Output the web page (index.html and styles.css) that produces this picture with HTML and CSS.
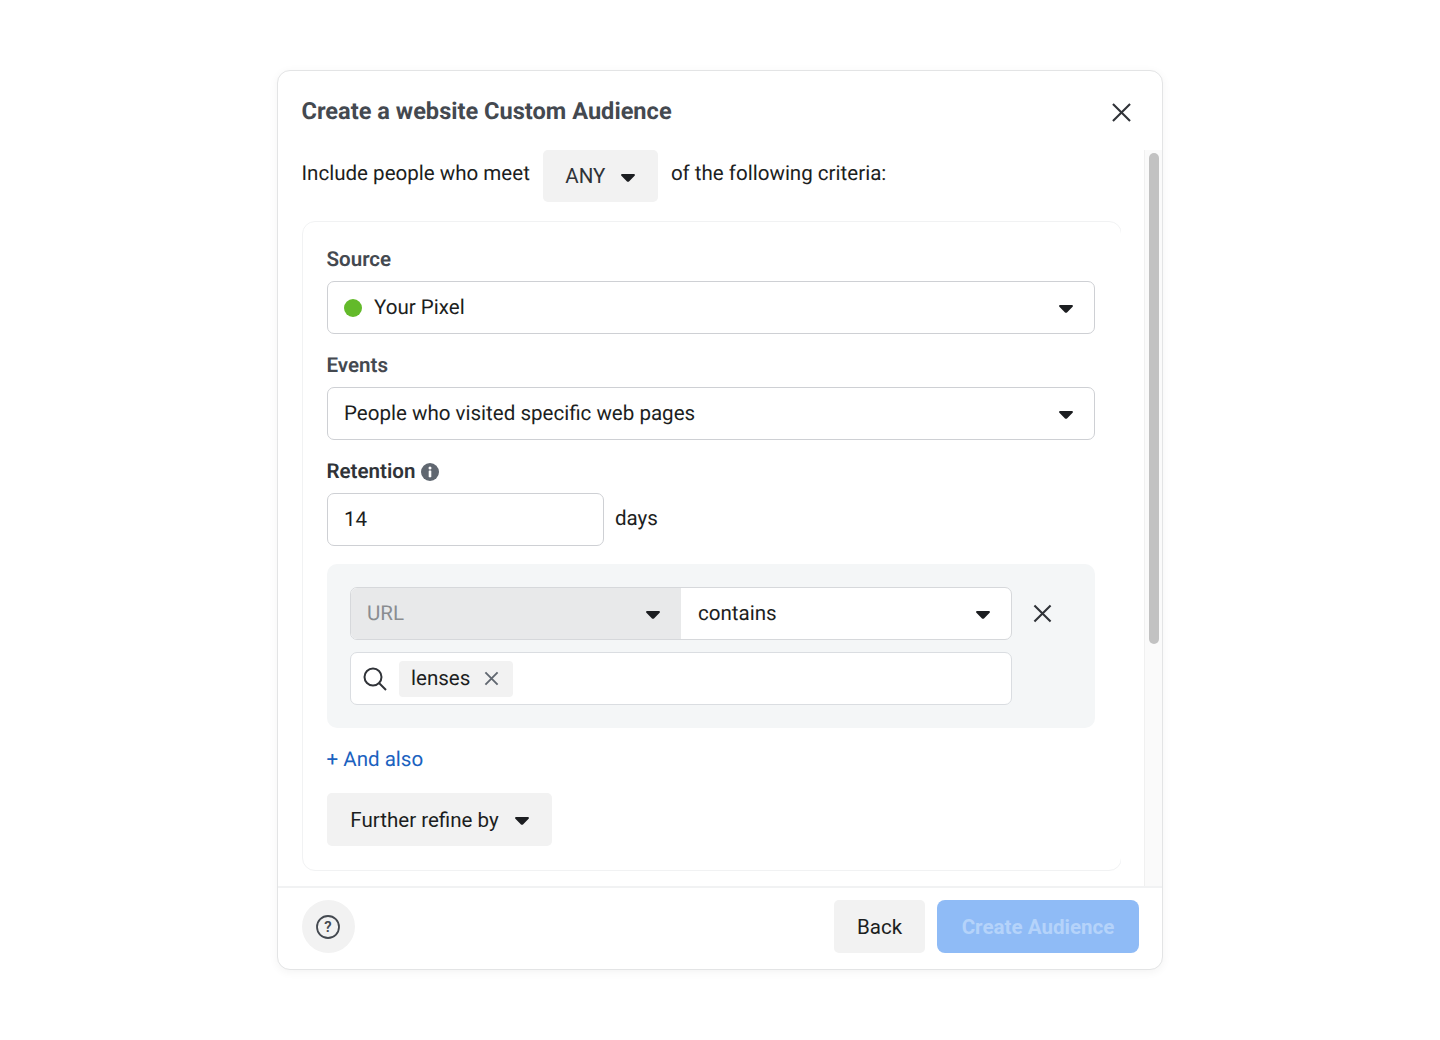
FILE: index.html
```html
<!DOCTYPE html>
<html lang="en">
<head>
<meta charset="utf-8">
<title>Create a website Custom Audience</title>
<link rel="stylesheet" href="styles.css">
</head>
<body>
<svg class="defs" width="0" height="0"><symbol id="caret" viewBox="0 0 14 8"><path d="M1.200 0h11.600c1 0 1.500 1.100.8 1.800L8 7.400c-.6.600-1.400.600-2 0L.4 1.800C-.3 1.100.2 0 1.200 0z"/></symbol></svg>
<div class="modal">
  <header class="modal-head">
    <h1 class="title">Create a website Custom Audience</h1>
    <svg class="close-icon" viewBox="0 0 20 20"><path d="M1 1L19 19M19 1L1 19"/></svg>
  </header>
  <div class="modal-main">
    <div class="content">
      <div class="criteria">
        <span class="criteria-text">Include people who meet</span>
        <button class="btn btn-any"><span class="any-text">ANY</span><svg class="caret"><use href="#caret"/></svg></button>
        <span class="criteria-text">of the following criteria:</span>
      </div>
      <section class="card">
        <label class="label label-first">Source</label>
        <div class="select">
          <span class="dot"></span><span class="grow">Your Pixel</span><svg class="caret"><use href="#caret"/></svg>
        </div>
        <label class="label">Events</label>
        <div class="select">
          <span class="grow">People who visited specific web pages</span><svg class="caret"><use href="#caret"/></svg>
        </div>
        <label class="label label-strong">Retention
          <svg class="info" viewBox="0 0 18 18"><circle cx="9" cy="9" r="9" fill="#606770"/><rect x="7.700" y="7.600" width="2.600" height="6.600" rx=".4" fill="#fff"/><circle cx="9" cy="5" r="1.500" fill="#fff"/></svg>
        </label>
        <div class="retention">
          <div class="select select-days">14</div>
          <span class="days">days</span>
        </div>
        <div class="rule">
          <div class="rule-top">
            <div class="joined">
              <div class="select-part part-url"><span class="grow">URL</span><svg class="caret"><use href="#caret"/></svg></div>
              <div class="select-part part-op"><span class="grow">contains</span><svg class="caret"><use href="#caret"/></svg></div>
            </div>
            <svg class="remove-icon" viewBox="0 0 20 20"><path d="M1.500 1.500L18.500 18.500M18.500 1.500L1.500 18.500"/></svg>
          </div>
          <div class="search">
            <svg class="search-icon" viewBox="0 0 24 24"><circle cx="10" cy="10" r="8.500"/><path d="M16 16L23 23"/></svg>
            <span class="chip">lenses<svg class="chip-x" viewBox="0 0 16 16"><path d="M1.500 1.500L14.500 14.500M14.500 1.500L1.500 14.500"/></svg></span>
          </div>
        </div>
        <a class="and-also">+ And also</a>
        <button class="btn btn-refine">Further refine by<svg class="caret"><use href="#caret"/></svg></button>
      </section>
    </div>
    <div class="scroll-track"><div class="scroll-thumb"></div></div>
  </div>
  <footer class="modal-foot">
    <button class="btn btn-help"><svg class="help-icon" viewBox="0 0 24 24"><circle cx="12" cy="12" r="11"/><text x="12" y="17" text-anchor="middle" class="help-q">?</text></svg></button>
    <div class="foot-actions">
      <button class="btn btn-back">Back</button>
      <button class="btn btn-primary">Create Audience</button>
    </div>
  </footer>
</div>
</body>
</html>
```
FILE: styles.css
```css
* { box-sizing: border-box; }
html, body { margin: 0; height: 100%; }
body {
  background: #fff;
  display: flex;
  align-items: center;
  justify-content: center;
  font-family: Roboto, "Liberation Sans", sans-serif;
  font-size: 20.55px;
  text-rendering: geometricPrecision;
  color: #1c1e21;
  height: 1040px;
}
.defs { position: absolute; }
.modal {
  width: 886px;
  height: 900px;
  border: 1px solid #e3e4e5;
  border-radius: 13px;
  background: #fff;
  box-shadow: 0 2px 10px rgba(0,0,0,.05);
  display: flex;
  flex-direction: column;
  overflow: hidden;
}
.modal-head {
  height: 79px;
  flex: none;
  display: flex;
  align-items: center;
  justify-content: space-between;
  padding: 0 31px 0 23.5px;
}
.title { margin: 1px 0 0; font-size: 23.6px; font-weight: 700; color: #444950; }
.close-icon { width: 19px; height: 19px; margin-top: 4px; fill: none; stroke: #303338; stroke-width: 2.200; }
.modal-main { flex: 1; min-height: 0; display: flex; }
.content { flex: 1; min-width: 0; padding-left: 24px; overflow: hidden; }
.criteria { display: flex; align-items: flex-start; gap: 13px; height: 52px; margin-left: -0.5px; }
.criteria-text { line-height: 48px; }
.btn {
  font: inherit;
  color: inherit;
  border: 0;
  background: #f2f2f2;
  border-radius: 5px;
  display: inline-flex;
  align-items: center;
  justify-content: center;
  padding: 0;
}
.btn-any { width: 115px; height: 52px; gap: 16px; color: #303338; }
.caret { display: block; flex: none; width: 14px; height: 8px; margin-top: 3px; fill: #1c1e21; }
.card {
  width: 820px;
  height: 650px;
  margin-top: 19px;
  padding: 0 26px 0 24px;
  border: 1px solid #f1f2f3;
  border-radius: 13px;
}
.label {
  display: flex;
  align-items: center;
  gap: 6px;
  height: 53px;
  padding-top: 11px;
  margin-left: -0.5px;
  font-weight: 600;
  color: #444950;
}
.label-first { height: 59px; padding-top: 17px; }
.label-strong { color: #303338; }
.select {
  height: 53px;
  border: 1px solid #ced0d4;
  border-radius: 7px;
  background: #fff;
  display: flex;
  align-items: center;
  padding: 0 21px 0 16px;
}
.grow { flex: 1; }
.dot { width: 18px; height: 18px; border-radius: 50%; background: #63ba2a; margin-right: 12px; flex: none; }
.info { width: 18px; height: 18px; }
.retention { display: flex; align-items: center; gap: 11px; }
.select-days { width: 277px; }
.days { position: relative; top: -1px; }
.rule {
  margin-top: 18px;
  height: 164px;
  padding: 23px 24px 0 23px;
  background: #f4f6f7;
  border-radius: 10px;
}
.rule-top { display: flex; align-items: center; gap: 21px; }
.joined {
  width: 662px;
  height: 53px;
  display: flex;
  border: 1px solid #d6d8db;
  border-radius: 7px;
  overflow: hidden;
  background: #fff;
}
.select-part { width: 50%; display: flex; align-items: center; padding: 0 21px 0 16px; }
.part-op { padding-left: 17px; }
.part-url { background: #e8e9ea; color: #8a8d91; }
.remove-icon { width: 19px; height: 19px; fill: none; stroke: #303338; stroke-width: 2.200; }
.search {
  margin-top: 12px;
  width: 662px;
  height: 53px;
  border: 1px solid #dadde1;
  border-radius: 7px;
  background: #fff;
  display: flex;
  align-items: center;
  gap: 12px;
  padding-left: 12px;
}
.search-icon { width: 24px; height: 24px; fill: none; stroke: #303338; stroke-width: 2; }
.chip {
  height: 36px;
  padding: 0 14px 0 12px;
  background: #f2f2f2;
  border-radius: 4px;
  display: flex;
  align-items: center;
  gap: 14px;
}
.chip-x { width: 15px; height: 15px; fill: none; stroke: #606770; stroke-width: 2; }
.and-also { display: block; margin-top: 19px; margin-left: -0.5px; line-height: 26px; color: #1b62bf; }
.btn-refine { width: 225px; height: 53px; margin-top: 20px; gap: 16px; }
.scroll-track {
  flex: none;
  width: 18px;
  margin-left: 23px;
  border-left: 1px solid #f0f0f0;
  background: #fafafa;
  padding: 3px 3px 0 4px;
}
.scroll-thumb { width: 10px; height: 491px; border-radius: 5px; background: #c2c2c2; }
.modal-foot {
  height: 83px;
  flex: none;
  border-top: 2px solid #f1f2f3;
  display: flex;
  align-items: flex-start;
  justify-content: space-between;
  padding: 12px 23px 0 24px;
}
.btn-help { width: 53px; height: 53px; border-radius: 50%; }
.help-icon { width: 24px; height: 24px; margin-left: -1px; fill: none; stroke: #444950; stroke-width: 1.800; }
.help-q { font-size: 15px; font-weight: 600; fill: #444950; stroke: none; }
.foot-actions { display: flex; gap: 12px; }
.btn-back { width: 91px; height: 53px; }
.btn-primary { width: 202px; height: 53px; background: #8fbbf6; color: #b5d3fa; font-weight: 700; border-radius: 8px; }
```
